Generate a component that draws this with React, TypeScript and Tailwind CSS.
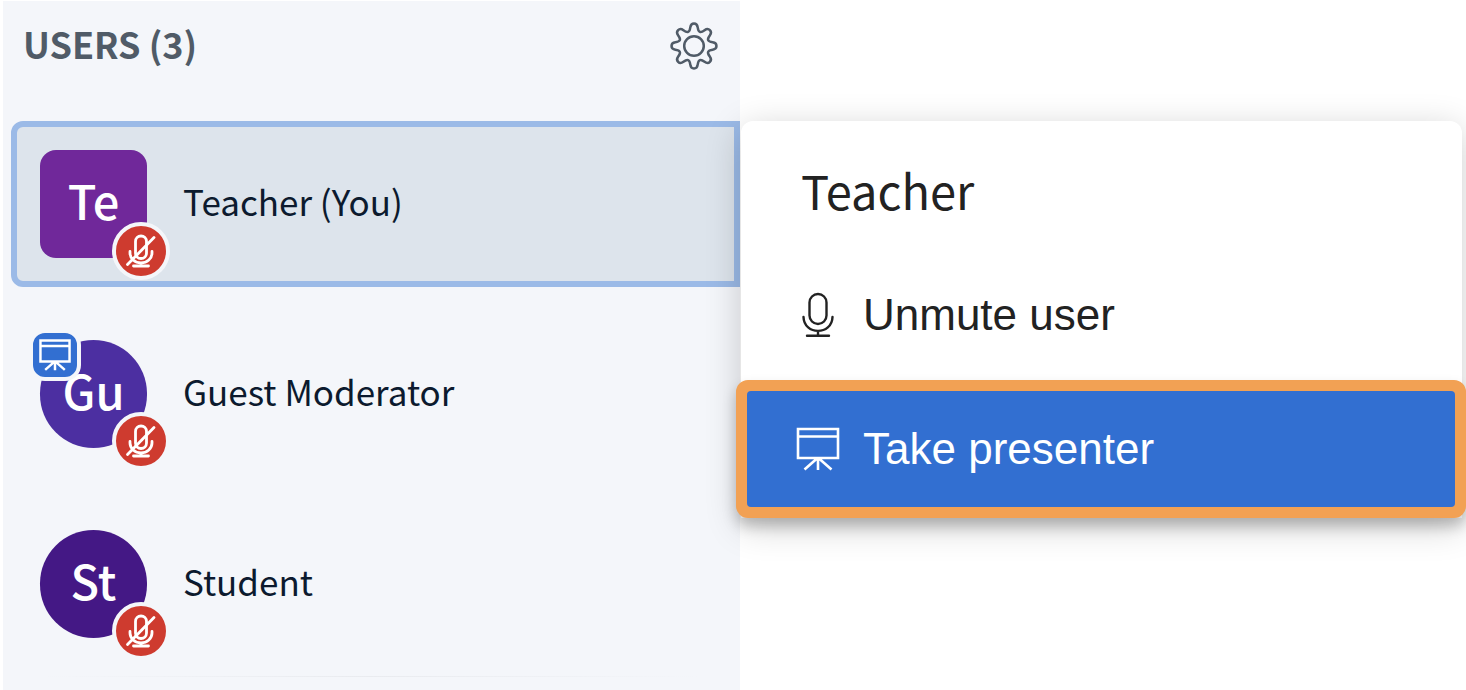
import type { ReactNode } from "react";

const sans = "font-['Noto_Sans_CJK_SC',sans-serif]";

function gearOutline(center: number) {
  const corners = Array.from({ length: 8 }, (_, tooth) =>
    [
      [-8, 22.7],
      [8, 22.7],
      [16, 15.4],
      [29, 15.4],
    ].map(([offset, radius]) => {
      const angle = ((tooth * 45 + offset) * Math.PI) / 180;
      return [center + radius * Math.sin(angle), center - radius * Math.cos(angle)];
    }),
  ).flat();
  const between = (i: number) => {
    const [ax, ay] = corners[i % corners.length];
    const [bx, by] = corners[(i + 1) % corners.length];
    return `${((ax + bx) / 2).toFixed(2)} ${((ay + by) / 2).toFixed(2)}`;
  };
  const curves = corners.map((_, i) => {
    const [x, y] = corners[(i + 1) % corners.length];
    return `Q${x.toFixed(2)} ${y.toFixed(2)} ${between(i + 1)}`;
  });
  return `M${between(0)}${curves.join("")}Z`;
}

const gearPath = gearOutline(24);

function GearIcon() {
  return (
    <svg viewBox="0 0 48 48" className="size-12" fill="none" stroke="currentColor" strokeWidth="2.5" strokeLinejoin="round" aria-hidden="true">
      <circle cx="24" cy="24" r="9.8" />
      <path d={gearPath} />
    </svg>
  );
}

function MutedIcon() {
  return (
    <svg viewBox="0 0 32 34" className="h-[34px] w-8" fill="none" stroke="currentColor" strokeWidth="2.8" strokeLinecap="round" aria-hidden="true">
      <rect x="10.500" y="2" width="11" height="22.500" rx="5.500" />
      <path d="M5 17.500v1.500a11 10 0 0 0 22 0v-1.500M16 29v3M8.500 32h15M2.500 30.500 29 3.500" />
    </svg>
  );
}

function MicIcon() {
  return (
    <svg viewBox="0 0 32 46" className="h-[46px] w-8" fill="none" stroke="currentColor" strokeWidth="2.4" strokeLinecap="round" aria-hidden="true">
      <rect x="7.500" y="2" width="17" height="30" rx="8.500" />
      <path d="M1.500 25C2 43.500 30 43.500 30.500 25M16 39v4.500M5 43.800h22" />
    </svg>
  );
}

function ScreenIcon({ className, stroke }: { className: string; stroke: number }) {
  return (
    <svg viewBox="0 0 44 44" className={className} fill="none" stroke="currentColor" strokeWidth={stroke} aria-hidden="true">
      <path d="M2 2h40v29H2zM2 9.500h40M22 31v12M21 31.500 8.500 42.500M23 31.500l12.500 11" />
    </svg>
  );
}

interface User {
  name: string;
  initials: string;
  avatar: string;
  selected?: boolean;
  presenter?: boolean;
}

const users: User[] = [
  { name: "Teacher (You)", initials: "Te", avatar: "rounded-2xl bg-[#70289a]", selected: true },
  { name: "Guest Moderator", initials: "Gu", avatar: "rounded-full bg-[#4c2fa1]", presenter: true },
  { name: "Student", initials: "St", avatar: "rounded-full bg-[#441885]" },
];

function UserRow({ user }: { user: User }) {
  return (
    <li>
      <button
        type="button"
        className={`flex h-[166px] w-full items-center gap-9 rounded-l-xl border-[6px] pl-[23px] text-left ${
          user.selected ? "border-[#9bbae7] bg-[#dde4ec]" : "border-transparent"
        }`}
      >
        <span className={`relative flex h-[108px] w-[107px] shrink-0 items-center justify-center pb-2 text-[47px] font-medium text-white ${user.avatar}`}>
          {user.initials}
          {user.presenter && (
            <span className="absolute -top-[11px] -left-[11px] flex size-[52px] items-center justify-center rounded-2xl border-4 border-[#f4f6fa] bg-[#326fd1]">
              <ScreenIcon className="size-8" stroke={3.4} />
            </span>
          )}
          <span className="absolute -right-[23px] -bottom-[22px] flex size-[58px] items-center justify-center rounded-full border-4 border-[#f4f6fa] bg-[#ce3b2f]">
            <MutedIcon />
          </span>
        </span>
        <span className="pb-[6px] text-[35px] text-[#0c1a2e]">{user.name}</span>
      </button>
    </li>
  );
}

function MenuItem({ icon, children }: { icon: ReactNode; children: ReactNode }) {
  return (
    <>
      <span className="flex w-11 shrink-0 justify-center">{icon}</span>
      <span>{children}</span>
    </>
  );
}

export default function App() {
  return (
    <main className={`grid min-h-screen grid-cols-[740fr_726fr] overflow-hidden bg-white ${sans}`}>
      <section className="mt-px ml-[3px] bg-[#f4f6fa]">
        <header className="flex h-[120px] items-start justify-between pt-[21px] pr-[22px] pl-5 text-[#505b67]">
          <h2 className="text-4xl leading-[42px] font-bold">USERS (3)</h2>
          <button type="button" aria-label="Manage users">
            <GearIcon />
          </button>
        </header>
        <ul className="flex flex-col gap-6 pl-2">
          {users.map((user) => (
            <UserRow key={user.initials} user={user} />
          ))}
        </ul>
        <div className="mx-10 mt-[9px] h-px bg-linear-to-r from-transparent via-[#e9ebef] to-transparent" />
      </section>

      <aside className="pt-[121px] pr-1 pl-px">
        <div className="rounded-t-xl bg-white font-['Liberation_Sans',sans-serif] text-[44px] shadow-[0_8px_36px_rgba(0,0,0,0.2)]">
          <h3 className={`pt-8 pl-[60px] text-[47px] leading-[74px] text-[#222] ${sans}`}>Teacher</h3>
          <button type="button" className="mt-7 flex h-[120px] w-full items-center gap-[23px] pl-[55px] text-left text-[#222]">
            <MenuItem icon={<MicIcon />}>Unmute user</MenuItem>
          </button>
          <div className="-mr-1 -ml-[5px] mt-[5px] rounded-xl border-[11px] border-[#f2a154] bg-[#f2a154] shadow-[0_8px_14px_rgba(0,0,0,0.22)]">
            <button type="button" className="flex h-[116px] w-full items-center gap-[23px] rounded-sm bg-[#326fd1] pl-[49px] text-left text-white">
              <MenuItem icon={<ScreenIcon className="size-11" stroke={2.6} />}>Take presenter</MenuItem>
            </button>
          </div>
        </div>
      </aside>
    </main>
  );
}
